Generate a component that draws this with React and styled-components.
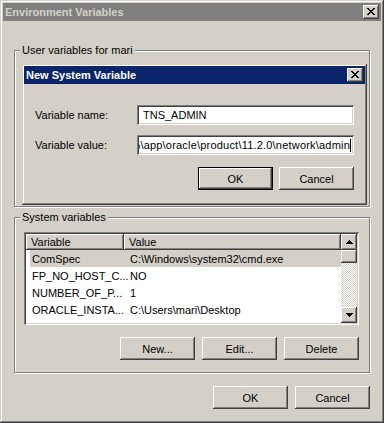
import React from 'react'
import styled, { createGlobalStyle } from 'styled-components'

const face = '#d4d0c8'

const raised = `
box-shadow: inset -1px -1px #404040, inset 1px 1px #fff, inset -2px -2px #808080, inset 2px 2px ${face};
`
const sunken = `
box-shadow: inset 1px 1px #808080, inset -1px -1px #fff, inset 2px 2px #404040, inset -2px -2px ${face};
`
const frame = `
box-shadow: inset -1px -1px #404040, inset 1px 1px ${face}, inset -2px -2px #808080, inset 2px 2px #fff;
`

const GlobalStyle = createGlobalStyle`
html, body {
  margin: 0;
  padding: 0;
  background: ${face};
}
body {
  font-family: "Liberation Sans", Arial, sans-serif;
  font-size: 11px;
  color: #000;
}
`

const Window = styled.div`
position: relative;
width: 384px;
height: 423px;
box-sizing: border-box;
padding: 3px;
background: ${face};
${frame}
`

const TitleBar = styled.div`
height: 18px;
display: flex;
align-items: center;
justify-content: space-between;
padding: 0 2px;
background: ${props => props.$active ? '#0a246a' : '#808080'};
color: ${props => props.$active ? '#fff' : face};
font-weight: bold;
white-space: nowrap;
`

const CloseBox = styled.div`
width: 16px;
height: 14px;
display: flex;
align-items: center;
justify-content: center;
background: ${face};
${raised}
`

const closeMap = [
  'XX....XX',
  '.XX..XX.',
  '..XXXX..',
  '...XX...',
  '..XXXX..',
  '.XX..XX.',
  'XX....XX',
]

const CloseButton = () => (
  <CloseBox>
    <svg width="8" height="7" viewBox="0 0 8 7" shapeRendering="crispEdges" style={{ marginTop: -1 }}>
      {closeMap.map((row, y) =>
        row.split('').map((c, x) =>
          c === 'X' ? <rect key={x + '-' + y} x={x} y={y} width="1" height="1" fill="#000" /> : null
        )
      )}
    </svg>
  </CloseBox>
)

const Body = styled.div`
padding: 0 11px;
`

const GroupBox = styled.div`
position: relative;
box-sizing: border-box;
margin-top: ${props => props.$top}px;
height: ${props => props.$h}px;
border: 1px solid #808080;
box-shadow: inset 1px 1px #fff, 1px 1px #fff;
padding: ${props => props.$pad || '0'};
`

const Legend = styled.span`
position: absolute;
top: -8px;
left: 5px;
padding: 0 2px 0 2px;
line-height: 14px;
background: ${face};
`

const Dialog = styled.div`
position: absolute;
left: 22px;
top: 64px;
width: 345px;
height: 141px;
box-sizing: border-box;
padding: 2px;
background: ${face};
${frame}
`

const DialogBody = styled.div`
padding: 21px 11px 0 11px;
`

const FieldGrid = styled.div`
display: grid;
grid-template-columns: 102px 1fr;
row-gap: 10px;
align-items: center;
`

const Label = styled.span`
white-space: nowrap;
`

const TextBox = styled.div`
height: 20px;
box-sizing: border-box;
padding: 0 3px 0 6px;
background: #fff;
${sunken}
display: flex;
align-items: center;
overflow: hidden;
white-space: nowrap;
`

const ScrolledText = styled.div`
flex: 1;
min-width: 0;
display: flex;
justify-content: flex-end;
overflow: hidden;
margin-left: -4px;
letter-spacing: 0.2px;
`

const Caret = styled.span`
flex: none;
width: 1px;
height: 13px;
background: #000;
`

const ButtonRow = styled.div`
display: flex;
justify-content: flex-end;
gap: ${props => props.$gap}px;
margin-top: ${props => props.$top}px;
`

const Button = styled.button`
width: 75px;
height: 23px;
box-sizing: border-box;
padding: 0;
margin: 0;
font: inherit;
color: #000;
background: ${face};
border: ${props => props.$default ? '1px solid #000' : 'none'};
${raised}
`

const ListView = styled.div`
display: flex;
height: 93px;
box-sizing: border-box;
padding: 2px;
background: #fff;
${sunken}
overflow: hidden;
`

const ListMain = styled.div`
flex: 1;
min-width: 0;
overflow: hidden;
`

const Header = styled.div`
display: grid;
grid-template-columns: 98px 1fr;
height: 16px;
`

const HeaderCell = styled.div`
background: ${face};
box-shadow: inset -1px -1px #404040, inset 1px 1px #fff, inset -2px -2px #808080;
padding-left: 5px;
line-height: 16px;
white-space: nowrap;
overflow: hidden;
`

const Row = styled.div`
display: grid;
grid-template-columns: 98px 1fr;
height: 17px;
margin-left: 4px;
align-items: center;
background: ${props => props.$selected ? face : 'transparent'};
`

const Cell = styled.span`
padding-left: 2px;
white-space: nowrap;
overflow: hidden;
`

const ScrollBar = styled.div`
width: 16px;
display: flex;
flex-direction: column;
background-color: #fff;
background-image: conic-gradient(${face} 25%, #fff 0 50%, ${face} 0 75%, #fff 0);
background-size: 2px 2px;
`

const ScrollButton = styled.div`
flex: none;
height: ${props => props.$h}px;
display: flex;
align-items: center;
justify-content: center;
background: ${face};
${raised}
`

const Spacer = styled.div`
flex: 1;
`

const Arrow = ({ down }) => (
  <svg width="7" height="4" viewBox="0 0 7 4" shapeRendering="crispEdges">
    <polygon points={down ? '0,0 7,0 3.5,4' : '3.5,0 7,4 0,4'} fill="#000" />
  </svg>
)

const rows = [
  ['ComSpec', 'C:\\Windows\\system32\\cmd.exe'],
  ['FP_NO_HOST_C...', 'NO'],
  ['NUMBER_OF_P...', '1'],
  ['ORACLE_INSTA...', 'C:\\Users\\mari\\Desktop'],
  ['OS', 'Windows_NT'],
]

const App = () => {
  return (
    <>
      <GlobalStyle />
      <Window>
        <TitleBar>
          <span>Environment Variables</span>
          <CloseButton />
        </TitleBar>
        <Body>
          <GroupBox $top={29} $h={157}>
            <Legend>User variables for mari</Legend>
          </GroupBox>

          <GroupBox $top={10} $h={156} $pad="14px 10px 0 9px">
            <Legend>System variables</Legend>
            <ListView>
              <ListMain>
                <Header>
                  <HeaderCell>Variable</HeaderCell>
                  <HeaderCell>Value</HeaderCell>
                </Header>
                {rows.map(([name, value], i) => (
                  <Row key={name} $selected={i === 0}>
                    <Cell>{name}</Cell>
                    <Cell>{value}</Cell>
                  </Row>
                ))}
              </ListMain>
              <ScrollBar>
                <ScrollButton $h={16}><Arrow /></ScrollButton>
                <ScrollButton $h={13} />
                <Spacer />
                <ScrollButton $h={16}><Arrow down /></ScrollButton>
              </ScrollBar>
            </ListView>
            <ButtonRow $gap={7} $top={12}>
              <Button>New...</Button>
              <Button>Edit...</Button>
              <Button>Delete</Button>
            </ButtonRow>
          </GroupBox>

          <ButtonRow $gap={7} $top={13}>
            <Button>OK</Button>
            <Button>Cancel</Button>
          </ButtonRow>
        </Body>

        <Dialog>
          <TitleBar $active>
            <span>New System Variable</span>
            <CloseButton />
          </TitleBar>
          <DialogBody>
            <FieldGrid>
              <Label>Variable name:</Label>
              <TextBox>TNS_ADMIN</TextBox>
              <Label>Variable value:</Label>
              <TextBox>
                <ScrolledText>
                  <span>E%\app\oracle\product\11.2.0\network\admin</span>
                </ScrolledText>
                <Caret />
              </TextBox>
            </FieldGrid>
            <ButtonRow $gap={6} $top={12}>
              <Button $default>OK</Button>
              <Button>Cancel</Button>
            </ButtonRow>
          </DialogBody>
        </Dialog>
      </Window>
    </>
  )
}

export default App
